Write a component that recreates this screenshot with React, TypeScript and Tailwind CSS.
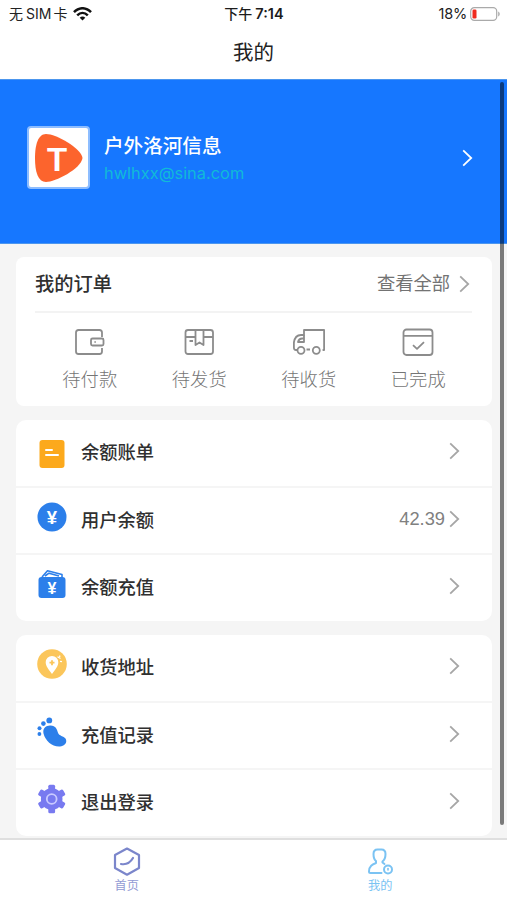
import type { ReactNode } from "react";

function Chevron({ className = "text-[#a6a6a6]" }: { className?: string }) {
  return (
    <svg className={`h-[18px] w-[11px] shrink-0 ${className}`} viewBox="0 0 11 18" fill="none" stroke="currentColor" strokeWidth="1.8">
      <path d="M1.2 1.4 9.2 9l-8 7.6" />
    </svg>
  );
}

function StatusBar() {
  return (
    <div className="flex h-7 items-center justify-between pl-[9px] pr-[6px] text-[14px] leading-7 text-[#222]">
      <div className="flex w-[160px] items-center">
        <span className="text-[14px]">无</span>
        <span className="ml-[3px] text-[14px]">SIM</span>
        <span className="ml-[2px] text-[14px]">卡</span>
        <svg className="ml-[6px] h-[14px] w-[19px]" viewBox="0 0 19 14" fill="none" stroke="#111" strokeWidth="2.5">
          <path d="M1 5.2C6-.1 13-.1 18 5.2" />
          <path d="M4.2 8.3c3.2-3.2 7.4-3.2 10.6 0" />
          <path d="M9.5 13.5 6.7 10.7c1.6-1.5 4-1.5 5.6 0z" fill="#111" stroke="none" />
        </svg>
      </div>
      <div className="flex gap-[3px] pr-[2px] font-semibold text-[#1c1c1c]">
        <span className="font-medium">下午</span>
        <span className="text-[14.5px]">7:14</span>
      </div>
      <div className="flex w-[160px] items-center justify-end">
        <span className="text-[14.5px] tracking-[-0.2px]">18%</span>
        <svg className="ml-[3px] h-[14px] w-[31px]" viewBox="0 0 31 14">
          <rect x="0.7" y="0.7" width="26" height="12.6" rx="3.6" fill="#fff" stroke="#aaa" strokeWidth="1.2" />
          <rect x="2.5" y="2.5" width="4" height="9" rx="1.3" fill="#ef2b20" />
          <path d="M28.2 4.5c2 .8 2 4.2 0 5z" fill="#aaa" />
        </svg>
      </div>
    </div>
  );
}

function WalletIcon() {
  return (
    <>
      <path d="M28 9V4.500Q28 2 25.500 2h-21Q2 2 2 4.500v19Q2 26 4.500 26h21Q28 26 28 23.500V20" />
      <rect x="17" y="10.500" width="12.500" height="7" rx="1.500" />
      <path d="M20.500 14h1.200" />
    </>
  );
}

function BoxIcon() {
  return (
    <>
      <rect x="2.500" y="2" width="27.500" height="24" rx="2.500" />
      <path d="M2.500 9h10M20.500 9H30M12.500 2v15l4-2.500 4 2.500V2M6.500 13H10" />
    </>
  );
}

function TruckIcon() {
  return (
    <>
      <path d="M4 22H3Q.9 22 .9 19.500V14.500Q2 7 8 7h3V2h20.100v20h-1.500M13.500 21.500h3.500" />
      <path d="M5 14Q6 10.500 9 10.500h2V14zM11 7v3.500" />
      <circle cx="8" cy="22.300" r="3.500" />
      <circle cx="23.300" cy="22.300" r="3.500" />
    </>
  );
}

function DoneIcon() {
  return (
    <>
      <rect x="1.500" y="1.500" width="29" height="25.500" rx="3" />
      <path d="M1.500 7.800h29M11 17.200l4 3.700 7-6.700" />
    </>
  );
}

function OrderItem({ label, children }: { label: string; children: ReactNode }) {
  return (
    <div className="flex flex-1 flex-col items-center">
      <svg className="h-7 w-8" viewBox="0 0 32 28" fill="none" stroke="#8c8c8c" strokeWidth="1.8" strokeLinejoin="round">
        {children}
      </svg>
      <span className="mt-[11px] text-[18.3px] font-light leading-6 text-[#757575]">{label}</span>
    </div>
  );
}

function BillIcon() {
  return (
    <svg className="mt-[5px] h-[30px] w-[30px]" viewBox="0 0 30 30">
      <rect x="2.500" y="1" width="25" height="28" rx="3" fill="#fca91c" />
      <path d="M9 11h6M9 16h12" stroke="#fff" strokeWidth="2" strokeLinecap="round" />
    </svg>
  );
}

function CoinIcon() {
  return (
    <svg className="h-[30px] w-[30px]" viewBox="0 0 30 30">
      <circle cx="15" cy="15" r="14.500" fill="#2c7fea" />
      <text x="15" y="21.500" textAnchor="middle" fill="#fff" fontSize="18.500" fontWeight="700" fontFamily="Liberation Sans">¥</text>
    </svg>
  );
}

function TopUpIcon() {
  return (
    <svg className="h-[30px] w-[30px]" viewBox="0 0 30 30">
      <path d="M5 8 10.500 1.700 25 5.500V9M8 7l4-2.800L22 7" fill="none" stroke="#2c7fea" strokeWidth="1.600" strokeLinejoin="round" />
      <rect x="1.500" y="8" width="27" height="21" rx="3" fill="#2c7fea" />
      <text x="15" y="24.500" textAnchor="middle" fill="#fff" fontSize="16" fontWeight="700" fontFamily="Liberation Sans">¥</text>
    </svg>
  );
}

function AddressIcon() {
  return (
    <svg className="h-[30px] w-[30px]" viewBox="0 0 30 30">
      <circle cx="15" cy="15" r="14.800" fill="#fbc65b" />
      <path d="M15 25C11.500 20.500 8.700 17 8.700 13.300a6.300 6.300 0 0 1 12.600 0C21.300 17 18.500 20.500 15 25z" fill="#fff" />
      <path d="M15 11.200v5M12.500 13.700h5" stroke="#fbc65b" strokeWidth="1.800" />
      <path d="m20.500 7.800 3 1.700M23 12.300l2 .4M22.700 6.500v1.500" stroke="#fff" strokeWidth="1.300" />
    </svg>
  );
}

function FootIcon() {
  return (
    <svg className="h-[30px] w-[30px]" viewBox="0 0 30 30" fill="#2c7fea">
      <circle cx="12.300" cy="3.400" r="2.900" />
      <circle cx="6.400" cy="6.600" r="2.300" />
      <circle cx="2.500" cy="11.300" r="2" />
      <circle cx="2.400" cy="17" r="1.900" />
      <path d="M13.500 8.500C8.500 8.200 5.500 12 6.500 16.500 8.500 24 15 30 23 29.500c5.500-.4 7.500-5 5.500-8-1.800-2.500-6.500-2.300-7.600-6-1-3.300-2-6.700-7.400-7z" />
    </svg>
  );
}

function GearIcon() {
  return (
    <svg className="h-[30px] w-[30px]" viewBox="0 0 30 30">
      <g fill="#787af0" transform="translate(14.700 15)">
        <circle r="10.800" />
        <rect x="-3.400" y="-14.300" width="6.800" height="28.600" rx="1.500" />
        <rect x="-3.400" y="-14.300" width="6.800" height="28.600" rx="1.500" transform="rotate(60)" />
        <rect x="-3.400" y="-14.300" width="6.800" height="28.600" rx="1.500" transform="rotate(120)" />
        <circle r="4.900" stroke="#c9caff" strokeWidth="1.800" />
      </g>
    </svg>
  );
}

function MenuRow({ icon, label, value }: { icon: ReactNode; label: string; value?: string }) {
  return (
    <div className="flex flex-1 items-start pl-[21px] pr-8">
      <div className="mt-[14px] h-[30px] w-[30px]">{icon}</div>
      <span className="ml-[14px] mt-[18px] text-[18.3px] font-medium leading-7 text-[#303030]">{label}</span>
      <div className="ml-auto mt-[17px] flex h-7 items-center">
        {value && (
          <span className="mr-[4px] mt-px font-['Liberation_Sans',sans-serif] text-[18.3px] text-[#808080]">{value}</span>
        )}
        <Chevron />
      </div>
    </div>
  );
}

function MenuCard({ children }: { children: ReactNode }) {
  return (
    <section className="flex h-[201px] shrink-0 flex-col divide-y-2 divide-[#f5f5f5] rounded-[10px] bg-white">
      {children}
    </section>
  );
}

export default function App() {
  return (
    <div className="relative flex h-[900px] w-[507px] flex-col overflow-hidden bg-[#f5f5f5] font-['Inter','Noto_Sans_CJK_SC',sans-serif]">
      <header className="h-[79px] shrink-0 bg-white">
        <StatusBar />
        <h1 className="text-center text-[20.5px] leading-[50px] text-[#222]">我的</h1>
      </header>

      <section className="flex h-[165px] shrink-0 items-center border-y border-[#4c96ee] bg-[#1677ff] pl-[27px] pr-[34px]">
        <div className="mt-[-8px] flex size-[63px] items-center justify-center rounded-[4px] border-2 border-[#8dbdff] bg-white">
          <svg className="h-[50px] w-[48px]" viewBox="0 0 48 50">
            <path d="M11 1C21 1 46 15 47.500 25 46 36 20 49 11 49 3 49 0 39 0 25 0 12 3 1 11 1z" fill="#fc642d" />
            <g transform="translate(22 38) scale(1.130 1)">
              <text textAnchor="middle" fill="#fff" fontSize="32" fontWeight="600" fontFamily="Noto Sans">T</text>
            </g>
          </svg>
        </div>
        <div className="ml-[14px] mt-[-4px]">
          <div className="text-[19.6px] font-medium leading-[27px] text-white">户外洛河信息</div>
          <div className="text-[16.4px] leading-[26px] text-[#11bad8]">hwlhxx@sina.com</div>
        </div>
        <Chevron className="ml-auto mt-[-7px] text-white" />
      </section>

      <main className="flex min-h-0 flex-1 flex-col gap-[14px] overflow-hidden pl-4 pr-[15px] pt-[13px]">
        <section className="h-[149px] shrink-0 rounded-[8px] bg-white">
          <div className="ml-[19px] mr-5 flex h-[56px] items-center justify-between border-b-2 border-[#f3f3f3]">
            <h2 className="text-[19.3px] font-medium text-[#303030]">我的订单</h2>
            <div className="flex items-center gap-[9px] pr-[2px] text-[18.3px] text-[#737373]">
              查看全部
              <Chevron />
            </div>
          </div>
          <div className="mx-[19px] flex pt-[15px]">
            <OrderItem label="待付款"><WalletIcon /></OrderItem>
            <OrderItem label="待发货"><BoxIcon /></OrderItem>
            <OrderItem label="待收货"><TruckIcon /></OrderItem>
            <OrderItem label="已完成"><DoneIcon /></OrderItem>
          </div>
        </section>
        <MenuCard>
          <MenuRow icon={<BillIcon />} label="余额账单" />
          <MenuRow icon={<CoinIcon />} label="用户余额" value="42.39" />
          <MenuRow icon={<TopUpIcon />} label="余额充值" />
        </MenuCard>
        <MenuCard>
          <MenuRow icon={<AddressIcon />} label="收货地址" />
          <MenuRow icon={<FootIcon />} label="充值记录" />
          <MenuRow icon={<GearIcon />} label="退出登录" />
        </MenuCard>
      </main>

      <nav className="flex h-[62px] shrink-0 border-t-2 border-[#dfdfdf] bg-white">
        <div className="flex flex-1 flex-col items-center pt-[7px] text-[#7b86cb]">
          <svg className="h-[29px] w-7" viewBox="0 0 28 29" fill="none" stroke="currentColor" strokeWidth="2.200" strokeLinejoin="round" strokeLinecap="round">
            <path d="M14 1.500 26 8v13l-12 6.700L2 21V8z" />
            <path d="M8 17c5 1 9-1 12-6" />
          </svg>
          <span className="mt-[2px] text-[12.2px] leading-4 text-[#929bd4]">首页</span>
        </div>
        <div className="flex flex-1 flex-col items-center pt-[7px] text-[#7bc3f3]">
          <svg className="h-[29px] w-7" viewBox="0 0 28 29" fill="none" stroke="currentColor" strokeWidth="2" strokeLinejoin="round" strokeLinecap="round">
            <path d="M15.500 26H4.500Q3 26 3 24.500C3 19 6.500 17.500 10 16V14C8 12.500 7.500 10 7.500 7Q7.500 2.500 11.500 2.500h4Q19.500 2.500 19.500 7c0 3-1 6-3 7.500v1l2 1.500" />
            <circle cx="22" cy="22.500" r="4" />
            <path d="M22 21.500v1.500" strokeWidth="1.600" />
          </svg>
          <span className="mt-[2px] text-[12.2px] leading-4">我的</span>
        </div>
      </nav>

      <div className="absolute right-[3px] top-[82px] h-[743px] w-1 rounded-full bg-black/50" />
    </div>
  );
}
